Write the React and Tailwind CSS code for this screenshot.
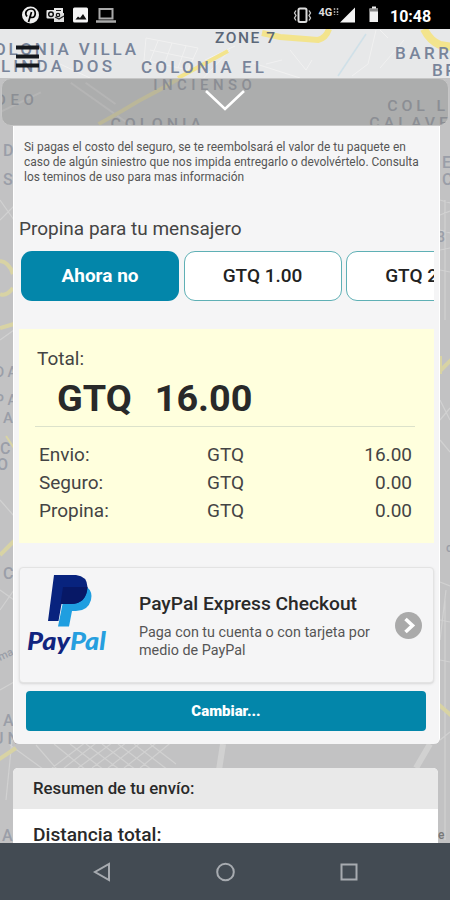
import React from "react";

const streets =
  "M146 38l52 10l-10 22l-44-10z M158 41l-8 20 M172 43l-8 22 M186 46l-8 22 M150 50l44 9 M205 60l30-14 M230 50l-34 36 M290 50l16 20l6-10 M282 60l-16 4 M376 30l-8 34l-16 12 M380 30l8 8 M404 40l-24 28 M250 62l50 16 M60 64l30 14";

const grid =
  "M10 745l44 32 M36 745l26 30 M52 768l34-26 M64 768l36-28 M78 768l38-28 M92 768l38-28 M108 768l36-28 M124 768l36-28 M140 768l34-28 M54 744l32 26 M70 744l34 26 M86 744l34 26 M102 744l34 26 M118 744l34 26 M134 744l34 26 M150 744l26 20 M0 340l14-10 M0 200l14 20 M0 220l14-14 M0 500l14 16 M0 590l14 10 M0 610l14-20 M0 690l14-8 M6 800l6-60 M440 582l10 4 M440 660l10 2 M446 590l-6 50 M440 230l10 3 M440 250l10-2 M440 270l10 2 M445 200v120 M440 400l10 20 M440 420l10-12 M440 440l10 12 M445 600v240 M440 620l10 2 M440 740l10-8 M440 200l10 3 M440 215l10-4";

function MapBackdrop() {
  return (
    <svg
      className="absolute inset-0 h-full w-full"
      viewBox="0 29 450 814"
      preserveAspectRatio="none"
      fontFamily="Roboto, sans-serif"
      fontWeight="500"
    >
      <rect y="29" width="450" height="50" fill="#e7e8e9" />
      <rect y="78" width="450" height="765" fill="#c2c2c3" />
      <g fill="none" stroke="#f1f1f1" strokeWidth="1">
        <path d={streets} />
      </g>
      <path d="M366 34l-28 42" stroke="#cfe0e8" strokeWidth="1.500" />
      <g fill="none" stroke="#f3e48d" strokeWidth="6">
        <path d="M178 78l50-27" strokeWidth="4" />
        <path d="M262 33l18 4l38 3q8-2 11-11" />
        <path d="M424 29q6 12 16 16l12 2" strokeWidth="8" />
      </g>
      <g fill="none" stroke="#d1d1d1" strokeWidth="1.200">
        <path d={grid} />
        <path d="M223 744l-4 26M430 744l-14 24" strokeWidth="6" />
      </g>
      <g fill="none" stroke="#d8d3a4" strokeWidth="4">
        <path d="M0 261q9 1 13 13M13 288q-7 9-13 6M0 328l14-4M0 555l14-14M-2 760l18-12M440 371l12-12M440 374v-18M438 704l14 12" />
        <path d="M6 436l8 12" strokeWidth="2" />
      </g>
      <g fill="#78849a" fontSize="17">
        <text x="-6" y="55" textLength="142">OLONIA VILLA</text>
        <text x="1" y="71.500" textLength="111">LINDA DOS</text>
        <text x="141" y="73" textLength="123">COLONIA EL</text>
        <text x="395" y="59" textLength="54">BARR</text>
        <text x="432" y="75.500" textLength="24">BR</text>
      </g>
      <text x="215" y="42.500" textLength="60" fontSize="15.500" fill="#5b6778">ZONE 7</text>
      <g fill="#9a9ea8" fontSize="16">
        <text x="3" y="156">D</text>
        <text x="3" y="185">S</text>
        <text x="442" y="168">E</text>
        <text x="442" y="185">C</text>
        <text x="437" y="242" fontSize="14">3</text>
        <text x="-5" y="377" fontSize="14">D A</text>
        <text x="-5" y="405" fontSize="14">P A</text>
        <text x="3" y="423" fontSize="15">A</text>
        <text x="0" y="454" fontSize="16">C</text>
        <text x="-3" y="470" fontSize="16">O</text>
        <text x="3" y="579" fontSize="16">C</text>
        <text x="0" y="661" fontSize="11" transform="rotate(-25 0 661)">ma</text>
        <text x="3" y="726" fontSize="16">A</text>
        <text x="-7" y="744" fontSize="16">U N</text>
        <text x="2" y="841" fontSize="16">A</text>
        <text x="438" y="839" fontSize="12" fill="#777">e</text>
        <text x="446" y="552" fontSize="12">c</text>
      </g>
    </svg>
  );
}

function HeaderMap() {
  return (
    <svg
      className="absolute inset-0 h-full w-full"
      viewBox="1 78 448 48"
      preserveAspectRatio="none"
      fontFamily="Roboto, sans-serif"
      fontWeight="500"
      fill="#8b8e94"
    >
      <path d="M70 82l60 44M0 112l40-20M85 82l30 22" stroke="#b5b5b5" strokeWidth="2" fill="none" />
      <path d="M98 125l24-14l16-10l20-11l20-12" stroke="#bbb799" strokeWidth="4" fill="none" />
      <text x="153" y="89" fontSize="15" textLength="99">INCIENSO</text>
      <text x="-5" y="105" fontSize="15" textLength="38">DEO</text>
      <text x="110" y="130" fontSize="16" textLength="91">COLONIA</text>
      <text x="388" y="111" fontSize="16" textLength="58">COL L</text>
      <text x="370" y="129" fontSize="16" textLength="79">CALAVE</text>
    </svg>
  );
}

function StatusBar() {
  return (
    <div className="flex h-[29px] shrink-0 items-center bg-black text-white">
      <svg className="h-[29px] w-[120px]" viewBox="0 0 120 29">
        <circle cx="30.500" cy="15" r="8.500" fill="#eee" />
        <path d="M28.500 22l3-10M27 16.500c-3-4 0-7.500 4-7.500c5.500 0 5.500 8.500 1 8.500c-1.500 0-2-1-2-1.500" fill="none" stroke="#000" strokeWidth="1.700" />
        <path d="M54 8h9v7l-4 2h-5z" fill="#e8e8e8" />
        <rect x="46.500" y="10" width="9" height="8.500" rx="1" fill="#e8e8e8" />
        <path d="M54 17l4.500-3.500l5.500-.5v9h-10z" fill="#ddd" />
        <path d="M56 10.500h5M55 17l4 2l5-3" fill="none" stroke="#222" strokeWidth="1.200" />
        <circle cx="51" cy="14.300" r="2.300" fill="none" stroke="#111" strokeWidth="1.500" />
        <circle cx="58" cy="15" r="1.700" fill="none" stroke="#111" strokeWidth="1.200" />
        <rect x="73" y="7.500" width="15" height="15" rx="1.500" fill="#f4f4f4" />
        <path d="M75.500 19.500l2.500-3l2 1.500l3-4l3.500 5.500z" fill="#111" />
        <rect x="99.500" y="9" width="13" height="9.500" fill="none" stroke="#aaa" strokeWidth="2" />
        <path d="M96 21.500h20" stroke="#aaa" strokeWidth="2.500" />
      </svg>
      <svg className="ml-[172px] h-[29px] w-[94px]" viewBox="292 0 94 29">
        <rect x="298.500" y="8.500" width="8" height="13.500" rx="1.500" fill="none" stroke="#ddd" strokeWidth="2" />
        <path d="M296 10.500l-1.500 2.500l1.500 2.500l-1.500 2.500l1.500 2.500M309 10.500l1.500 2.500l-1.500 2.500l1.500 2.500l-1.500 2.500" fill="none" stroke="#ccc" strokeWidth="1.300" />
        <text x="318.500" y="15.500" fontFamily="Roboto, sans-serif" fontSize="11" fontWeight="700" fill="#ddd">4G</text>
        <path d="M334.500 8v7M337.500 8v7" stroke="#999" strokeWidth="1.500" strokeDasharray="2 1" />
        <path d="M340 22.500l15-15v15z" fill="#f4f4f4" />
        <path d="M369.500 8.500h2.500v-2h4v2h2v13.500h-8.500z" fill="#f0f0f0" />
        <path d="M369.500 8.500h8.500v3h-8.500z" fill="#888" />
      </svg>
      <span className="mt-[4px] ml-[4px] text-[16px] leading-none font-bold">10:48</span>
    </div>
  );
}

function TipOption({ label, selected }) {
  return (
    <button
      className={
        selected
          ? "h-[50px] w-[158px] shrink-0 rounded-[11px] bg-[#0386aa] pt-px text-[19px] font-bold text-white"
          : "h-[50px] w-[158px] shrink-0 rounded-[11px] border border-[#5fb0b5] bg-white pt-px text-[19px] font-medium text-[#222]"
      }
    >
      {label}
    </button>
  );
}

function CostRow({ label, amount }) {
  return (
    <div className="flex h-[28px] items-center">
      <span className="w-[168px]">{label}</span>
      <span>GTQ</span>
      <span className="ml-auto">{amount}</span>
    </div>
  );
}

function PayPalLogo() {
  return (
    <svg className="h-[80px] w-[82px] shrink-0" viewBox="26 574 82 80">
      <path d="M66 587h21q6 5 4 13q-3 11-15 11h-4l-3 15.500h-11z" fill="#1f9ee0" />
      <path d="M54 575h22q11 1 11.500 12q-1 17-17 17h-9l-3 17h-10.500z" fill="#08237e" />
      <path d="M63 587h24.500q-1 17-17 17h-10z" fill="#071866" />
      <g fontFamily="Lato, sans-serif" fontWeight="900" fontStyle="italic" fontSize="24">
        <text x="27" y="649.500" textLength="43" lengthAdjust="spacingAndGlyphs" fill="#10247f">Pay</text>
        <text x="70" y="649.500" textLength="36" lengthAdjust="spacingAndGlyphs" fill="#269fdf">Pal</text>
      </g>
    </svg>
  );
}

function PaymentPanel() {
  return (
    <section className="ml-[13px] flex h-[618px] w-[427px] shrink-0 flex-col rounded-b-[6px] border-x border-white bg-[#f5f5f6] pr-[5px] pl-[5px]">
      <p className="mt-[14px] ml-[5px] text-[11.950px] leading-[15px] whitespace-nowrap text-[#555]">
        Si pagas el costo del seguro, se te reembolsará el valor de tu paquete en
        <br />
        caso de algún siniestro que nos impida entregarlo o devolvértelo. Consulta
        <br />
        los teminos de uso para mas información
      </p>
      <h2 className="mt-[31px] h-[26px] text-[19px] leading-[26px] text-[#444]">Propina para tu mensajero</h2>
      <div className="mt-[9px] ml-[2px] flex gap-[4.500px] overflow-hidden">
        <TipOption label="Ahora no" selected />
        <TipOption label="GTQ 1.00" />
        <TipOption label="GTQ 2.00" />
      </div>
      <div className="mt-[28px] flex h-[214px] flex-col bg-[#ffffdd] px-[18px] pt-[18px] text-[19px] text-[#444]">
        <span className="h-[24px] leading-[24px]">Total:</span>
        <div className="ml-[20px] flex h-[54px] items-center gap-[23px] text-[37.800px] font-bold text-[#292929]">
          <span>GTQ</span>
          <span>16.00</span>
        </div>
        <hr className="mt-px -ml-[2px] w-[380px] border-[#dce2cb]" />
        <div className="mt-[14px] pr-[4px] pl-[2px]">
          <CostRow label="Envio:" amount="16.00" />
          <CostRow label="Seguro:" amount="0.00" />
          <CostRow label="Propina:" amount="0.00" />
        </div>
      </div>
      <div className="mt-[24px] flex h-[116px] items-start rounded-[4px] border border-[#e3e3e3] bg-[#f5f5f6] pl-[6px] shadow-sm">
        <div className="mt-[6px]">
          <PayPalLogo />
        </div>
        <div className="mt-[24px] ml-[31px] whitespace-nowrap">
          <h3 className="text-[19.200px] leading-[24px] font-medium text-[#292929]">PayPal Express Checkout</h3>
          <p className="mt-[8px] text-[14.350px] leading-[18px] text-[#555]">
            Paga con tu cuenta o con tarjeta por
            <br />
            medio de PayPal
          </p>
        </div>
        <svg className="mt-[44px] mr-[11px] ml-auto h-[27px] w-[27px] shrink-0" viewBox="0 0 27 27">
          <circle cx="13.500" cy="13.500" r="13.500" fill="#aaa" />
          <path d="M10.500 7l7 6.500l-7 6.500" fill="none" stroke="#fff" strokeWidth="3.600" />
        </svg>
      </div>
      <button className="mt-[8px] ml-[7px] h-[40px] w-[400px] shrink-0 rounded-[4px] bg-[#0386aa] text-[15px] font-black text-white">
        Cambiar...
      </button>
    </section>
  );
}

export default function App() {
  return (
    <div className="flex h-[900px] w-[450px] flex-col overflow-hidden font-['Roboto',sans-serif]">
      <StatusBar />
      <main className="relative h-[814px] shrink-0 overflow-hidden">
        <MapBackdrop />
        <div className="relative flex h-full flex-col">
          <div className="h-[49px] shrink-0 pt-[15px] pl-[15px]">
            <svg className="h-[26px] w-[26px]" viewBox="0 0 26 26">
              <path d="M1 3.500h23M1 12.500h23M1 21.500h23" stroke="#15181d" strokeWidth="4" />
            </svg>
          </div>
          <div className="relative mx-px flex h-[48px] shrink-0 justify-center overflow-hidden rounded-[10px] border border-[#c6c6c6] bg-[#acadad]">
            <HeaderMap />
            <svg className="relative mt-[9px] h-[24px] w-[42px]" viewBox="0 0 42 24">
              <path d="M2 3l19 18l19-18" fill="none" stroke="#fff" strokeWidth="2.600" />
            </svg>
          </div>
          <PaymentPanel />
          <section className="mt-[24px] ml-[13px] h-[75px] w-[425px] shrink-0 overflow-hidden rounded-t-[5px] bg-white text-[#292929]">
            <h2 className="h-[41px] bg-[#e9e9e9] pl-[20px] text-[16.800px] leading-[40px] font-medium">
              Resumen de tu envío:
            </h2>
            <p className="pt-[14px] pl-[20px] text-[19.200px] leading-[24px] font-medium">Distancia total:</p>
          </section>
        </div>
      </main>
      <nav className="flex h-[57px] shrink-0 items-center bg-[#434b53] pl-[92px]">
        <svg className="h-[20px] w-[268px]" viewBox="92 862 268 20" fill="none" stroke="#a7abb0" strokeWidth="2">
          <path d="M109 864v16l-14-8z" />
          <circle cx="225.500" cy="872" r="8.300" />
          <rect x="341.500" y="864.500" width="15" height="15" />
        </svg>
      </nav>
    </div>
  );
}
